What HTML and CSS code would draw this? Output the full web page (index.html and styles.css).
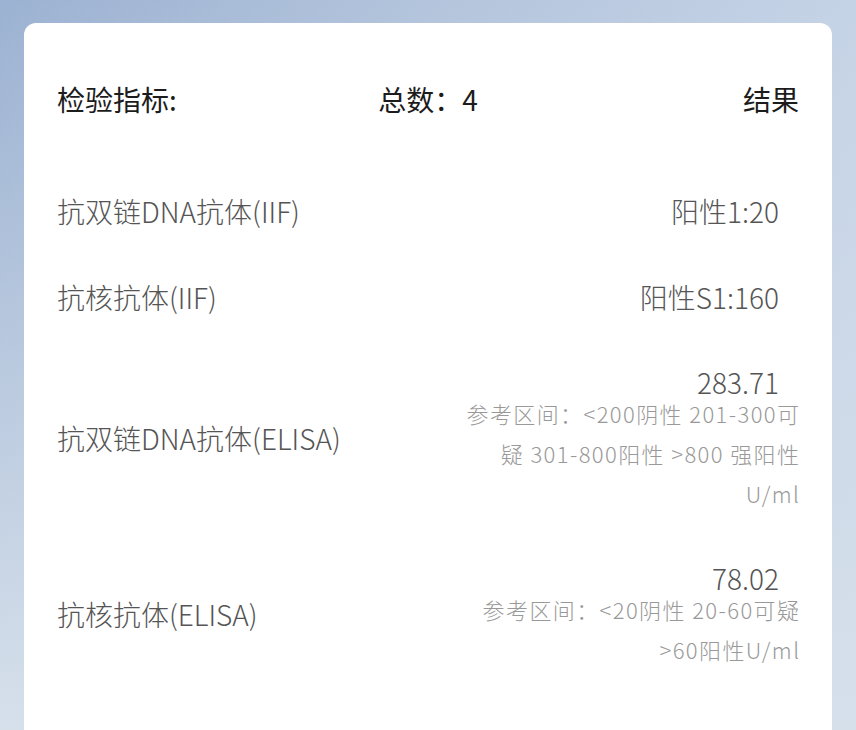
FILE: index.html
```html
<!DOCTYPE html>
<html lang="zh-CN">
<head>
<meta charset="utf-8">
<title>检验指标</title>
<link rel="stylesheet" href="styles.css">
</head>
<body>
<div class="page">
  <div class="card">
    <div class="head">
      <div class="head-left">检验指标:</div>
      <div class="head-mid">总数：4</div>
      <div class="head-right">结果</div>
    </div>
    <div class="list">
      <div class="row">
        <div class="name">抗双链DNA抗体(IIF)</div>
        <div class="result"><div class="value">阳性1:20</div></div>
      </div>
      <div class="row">
        <div class="name">抗核抗体(IIF)</div>
        <div class="result"><div class="value">阳性S1:160</div></div>
      </div>
      <div class="row detail">
        <div class="name">抗双链DNA抗体(ELISA)</div>
        <div class="result">
          <div class="value tight">283.71</div>
          <div class="ref">参考区间：&lt;200阴性 201-300可</div>
          <div class="ref">疑 301-800阳性 &gt;800 强阳性</div>
          <div class="ref">U/ml</div>
        </div>
      </div>
      <div class="row detail">
        <div class="name">抗核抗体(ELISA)</div>
        <div class="result">
          <div class="value tight">78.02</div>
          <div class="ref">参考区间：&lt;20阴性 20-60可疑</div>
          <div class="ref">&gt;60阳性U/ml</div>
        </div>
      </div>
    </div>
  </div>
</div>
</body>
</html>
```

FILE: styles.css
```css
html, body {
  margin: 0;
  padding: 0;
  height: 100%;
  overflow: hidden;
}
body {
  font-family: "Noto Sans CJK SC", "Noto Sans", sans-serif;
  font-weight: 300;
  background: linear-gradient(180deg, rgba(214,224,235,0) 0%, #d6e0eb 100%),
              linear-gradient(90deg, #9cb2d2 0%, #b3c4dc 50%, #c5d3e6 100%);
}
.page {
  padding: 23px 24px 0;
}
.card {
  background: #fff;
  border-radius: 12px;
  padding: 56px 33px 0;
  min-height: 800px;
}
.head {
  display: grid;
  grid-template-columns: 1fr auto 1fr;
  align-items: center;
  font-size: 28px;
  line-height: 40px;
  font-weight: 400;
  color: #1c1c1c;
}
.head-right {
  text-align: right;
}
.list {
  margin-top: 72px;
  display: flex;
  flex-direction: column;
  gap: 46px;
}
.row {
  display: flex;
  justify-content: space-between;
  align-items: center;
}
.row.detail {
  padding-top: 4px;
}
.row.detail:last-child {
  padding-top: 8px;
}
.name {
  font-size: 28px;
  line-height: 40px;
  color: #555;
}
.result {
  display: flex;
  flex-direction: column;
  align-items: flex-end;
  text-align: right;
}
.value {
  font-size: 28px;
  line-height: 40px;
  color: #555;
  padding-right: 20px;
}
.value.tight {
  line-height: 30px;
}
.ref {
  font-size: 22px;
  line-height: 32px;
  letter-spacing: 1.4px;
  margin-right: -1.4px;
  color: #999;
}
.ref + .ref {
  margin-top: 8px;
}
```
